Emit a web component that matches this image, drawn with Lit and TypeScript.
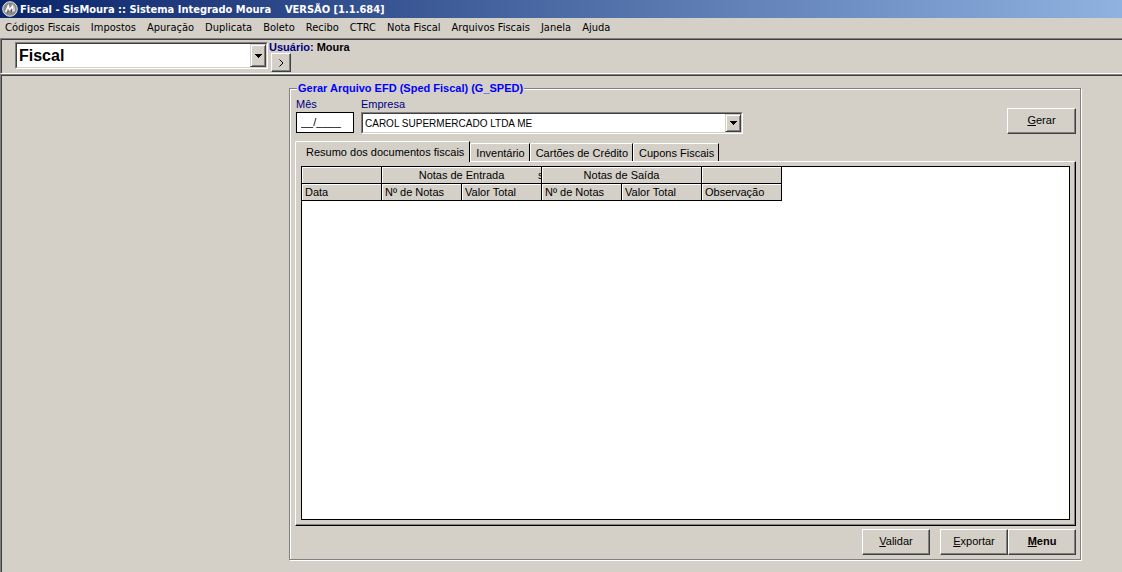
import { LitElement, html, css } from "lit";
import { customElement, state } from "lit/decorators.js";

const MENUS = [
  "Códigos Fiscais", "Impostos", "Apuração", "Duplicata", "Boleto", "Recibo",
  "CTRC", "Nota Fiscal", "Arquivos Fiscais", "Janela", "Ajuda",
];

const TABS = [
  "Resumo dos documentos fiscais", "Inventário", "Cartões de Crédito", "Cupons Fiscais",
];

@customElement("combo-box")
class ComboBox extends LitElement {
  static properties = {
    label: { type: String },
    value: { type: String },
  };
  declare label: string;
  declare value: string;

  static styles = css`
    :host {
      display: block;
      box-sizing: border-box;
      border: 1px solid;
      border-color: #808080 #ffffff #ffffff #808080;
    }
    .inner {
      display: grid;
      grid-template-columns: 1fr 16px;
      height: 100%;
      box-sizing: border-box;
      border: 1px solid;
      border-color: #404040 #d4d0c8 #d4d0c8 #404040;
      background: #ffffff;
    }
    select {
      grid-area: 1 / 1 / 2 / 3;
      appearance: none;
      border: 0;
      margin: 0;
      padding: 0 18px 0 2px;
      background: transparent;
      font: inherit;
      color: #000000;
      outline: none;
      width: 100%;
      min-width: 0;
      height: 100%;
    }
    .arrow {
      grid-area: 1 / 2 / 2 / 3;
      display: flex;
      align-items: center;
      justify-content: center;
      background: #d4d0c8;
      border: 1px solid;
      border-color: #d4d0c8 #404040 #404040 #d4d0c8;
      box-shadow: inset 1px 1px #ffffff, inset -1px -1px #808080;
      pointer-events: none;
    }
  `;

  render() {
    return html`
      <div class="inner">
        <select aria-label=${this.label}>
          <option>${this.value}</option>
        </select>
        <span class="arrow">
          <svg width="7" height="4" viewBox="0 0 7 4" shape-rendering="crispEdges" aria-hidden="true">
            <path d="M0 0h7v1H0zM1 1h5v1H1zM2 2h3v1H2zM3 3h1v1H3z" fill="#000000" />
          </svg>
        </span>
      </div>
    `;
  }
}

@customElement("app-root")
class AppRoot extends LitElement {
  @state() private tab = 0;

  static styles = css`
    :host {
      display: flex;
      flex-direction: column;
      min-height: 100vh;
      background: #d4d0c8;
      color: #000000;
      font: 11px/13px "Liberation Sans", Arial, sans-serif;
    }
    button,
    input {
      font: inherit;
      color: inherit;
      margin: 0;
      border-radius: 0;
    }
    .title {
      display: flex;
      align-items: center;
      gap: 2px;
      height: 18px;
      padding-left: 2px;
      background: linear-gradient(to right, #0a246a, #8fb2e0);
      color: #ffffff;
      font: bold 11px/16px "DejaVu Sans Condensed", Tahoma, sans-serif;
      white-space: pre;
    }
    .title h1 {
      margin: 0;
      padding-top: 2px;
      font: inherit;
    }
    .menu {
      display: flex;
      gap: 11px;
      height: 20px;
      padding-left: 5px;
      font: 11px/20px "DejaVu Sans Condensed", Tahoma, sans-serif;
    }
    .menu button {
      border: 0;
      padding: 0;
      background: none;
      white-space: nowrap;
    }
    .toolbar {
      display: flex;
      box-sizing: border-box;
      height: 36px;
      padding: 2px 0 0 14px;
      border: solid #808080;
      border-width: 1px 0 0 1px;
      border-bottom: 1px solid #ffffff;
      box-shadow: inset 1px 1px #404040;
    }
    .module {
      width: 253px;
      height: 27px;
      margin-top: 1px;
      font: bold 16px/22px "Liberation Sans", Arial, sans-serif;
    }
    .user {
      display: flex;
      flex-direction: column;
      align-items: flex-start;
      padding-left: 1px;
      font-weight: bold;
    }
    .user .who {
      color: #000080;
      height: 12px;
    }
    .user b {
      color: #000000;
    }
    .btn {
      box-sizing: border-box;
      padding: 0 0 2px;
      background: #d4d0c8;
      border: 1px solid;
      border-color: #ffffff #404040 #404040 #ffffff;
      box-shadow: inset -1px -1px #808080;
    }
    .go {
      width: 20px;
      height: 19px;
      margin-left: 2px;
      padding: 0;
      display: flex;
      align-items: center;
      justify-content: center;
    }
    .work {
      flex: 1;
      display: flex;
      padding: 7px 41px 12px 288px;
      border: solid #808080;
      border-width: 1px 0 0 1px;
      box-shadow: inset 1px 1px #404040;
    }
    fieldset {
      flex: 1;
      min-width: 0;
      display: flex;
      flex-direction: column;
      margin: 0;
      padding: 3px 4px 4px 5px;
      border: 1px solid #808080;
      box-shadow: inset 1px 1px #ffffff, 1px 1px #ffffff;
    }
    legend {
      margin-left: 2px;
      padding: 0 1px;
      background: #d4d0c8;
      color: #0000ff;
      font-weight: bold;
    }
    .fields {
      display: flex;
      gap: 7px;
      padding-left: 1px;
    }
    .field {
      display: flex;
      flex-direction: column;
      gap: 1px;
      color: #000080;
    }
    .month {
      box-sizing: border-box;
      width: 58px;
      height: 21px;
      padding: 0 4px 2px;
      border: 1px solid #000000;
      background: #ffffff;
      color: #000000;
      outline: none;
    }
    .company {
      width: 382px;
      height: 22px;
      color: #000000;
      font-size: 10px;
    }
    .action {
      width: 69px;
      height: 26px;
    }
    .right {
      margin-left: auto;
      align-self: flex-end;
    }
    .tabs {
      display: flex;
      align-items: flex-end;
      height: 20px;
      margin-top: 7px;
    }
    .tab {
      height: 18px;
      padding: 1px 4px 0 5px;
      border: solid;
      border-width: 1px 1px 0 1px;
      border-color: #ffffff #000000 #ffffff #ffffff;
      border-top-left-radius: 2px;
      background: #d4d0c8;
      white-space: nowrap;
    }
    .tab.on {
      height: 21px;
      margin-bottom: -1px;
      padding: 0 5px 0 10px;
      z-index: 1;
    }
    .panel {
      flex: 1;
      display: flex;
      padding: 4px 5px 4px 5px;
      border: 1px solid;
      border-color: #ffffff #000000 #000000 #ffffff;
      box-shadow: inset -1px -1px #808080;
      padding-bottom: 5px;
    }
    .grid {
      flex: 1;
      border: 1px solid #000000;
      background: #ffffff;
    }
    table {
      border-collapse: separate;
      border-spacing: 0;
      table-layout: fixed;
      width: 480px;
    }
    th {
      box-sizing: border-box;
      height: 17px;
      padding: 0 0 0 3px;
      overflow: hidden;
      border: solid #000000;
      border-width: 0 1px 1px 0;
      background: #d4d0c8;
      box-shadow: inset 1px 1px #ffffff;
      font-weight: normal;
      text-align: left;
      white-space: nowrap;
    }
    th.group {
      padding: 0;
      text-align: center;
    }
    .split {
      display: grid;
      grid-template-columns: 3px 1fr 3px;
    }
    .cut {
      overflow: hidden;
    }
    .actions {
      display: flex;
      justify-content: flex-end;
      margin-top: 3px;
    }
    .actions .action {
      width: 68px;
    }
    .actions .check {
      margin-right: 10px;
    }
    .strong {
      font-weight: bold;
    }
  `;

  render() {
    return html`
      <header class="title">
        <svg width="16" height="16" viewBox="0 0 16 16" aria-hidden="true">
          <circle cx="8" cy="8" r="7.3" fill="#8c8c8c" stroke="#e4e4e4" />
          <path d="M3.6 11.2 6.2 5l1.2 4L10.6 5l.5 5.6" fill="none" stroke="#fff" stroke-width="1.5" />
          <path d="M12.2 5.4 12.6 10.5" fill="none" stroke="#d8d8d8" />
          <path d="M5.2 12 7 9.5M9 11.6 10 8.4" fill="none" stroke="#555" />
        </svg>
        <h1>Fiscal - SisMoura :: Sistema Integrado Moura    VERSÃO [1.1.684]</h1>
      </header>
      <nav class="menu">${MENUS.map((m) => html`<button>${m}</button>`)}</nav>
      <div class="toolbar">
        <combo-box class="module" label="Módulo" value="Fiscal"></combo-box>
        <div class="user">
          <span class="who">Usuário: <b>Moura</b></span>
          <button class="btn go" aria-label="Avançar">
            <svg width="5" height="8" viewBox="0 0 5 8" aria-hidden="true">
              <path d="M.5.5 4 4 .5 7.5" fill="none" stroke="#000" />
            </svg>
          </button>
        </div>
      </div>
      <main class="work">
        <fieldset>
          <legend>Gerar Arquivo EFD (Sped Fiscal) (G_SPED)</legend>
          <div class="fields">
            <div class="field">
              <label for="month">Mês</label>
              <input id="month" class="month" type="text" value="__/____" />
            </div>
            <div class="field">
              <span>Empresa</span>
              <combo-box class="company" label="Empresa" value="CAROL SUPERMERCADO LTDA ME"></combo-box>
            </div>
            <button class="btn action right"><u>G</u>erar</button>
          </div>
          <div class="tabs" role="tablist">
            ${TABS.map(
              (t, i) => html`<button
                role="tab"
                class="tab ${i === this.tab ? "on" : ""}"
                aria-selected=${i === this.tab}
                @click=${() => (this.tab = i)}
              >${t}</button>`
            )}
          </div>
          <div class="panel" role="tabpanel">
            <div class="grid">
              <table>
                <thead>
                  <tr>
                    <th></th>
                    <th class="group" colspan="2">
                      <div class="split"><span></span><span>Notas de Entrada</span><span class="cut">s</span></div>
                    </th>
                    <th class="group" colspan="2">Notas de Saída</th>
                    <th></th>
                  </tr>
                  <tr>
                    <th>Data</th>
                    <th>Nº de Notas</th>
                    <th>Valor Total</th>
                    <th>Nº de Notas</th>
                    <th>Valor Total</th>
                    <th>Observação</th>
                  </tr>
                </thead>
              </table>
            </div>
          </div>
          <div class="actions">
            <button class="btn action check"><u>V</u>alidar</button>
            <button class="btn action"><u>E</u>xportar</button>
            <button class="btn action strong"><u>M</u>enu</button>
          </div>
        </fieldset>
      </main>
    `;
  }
}
